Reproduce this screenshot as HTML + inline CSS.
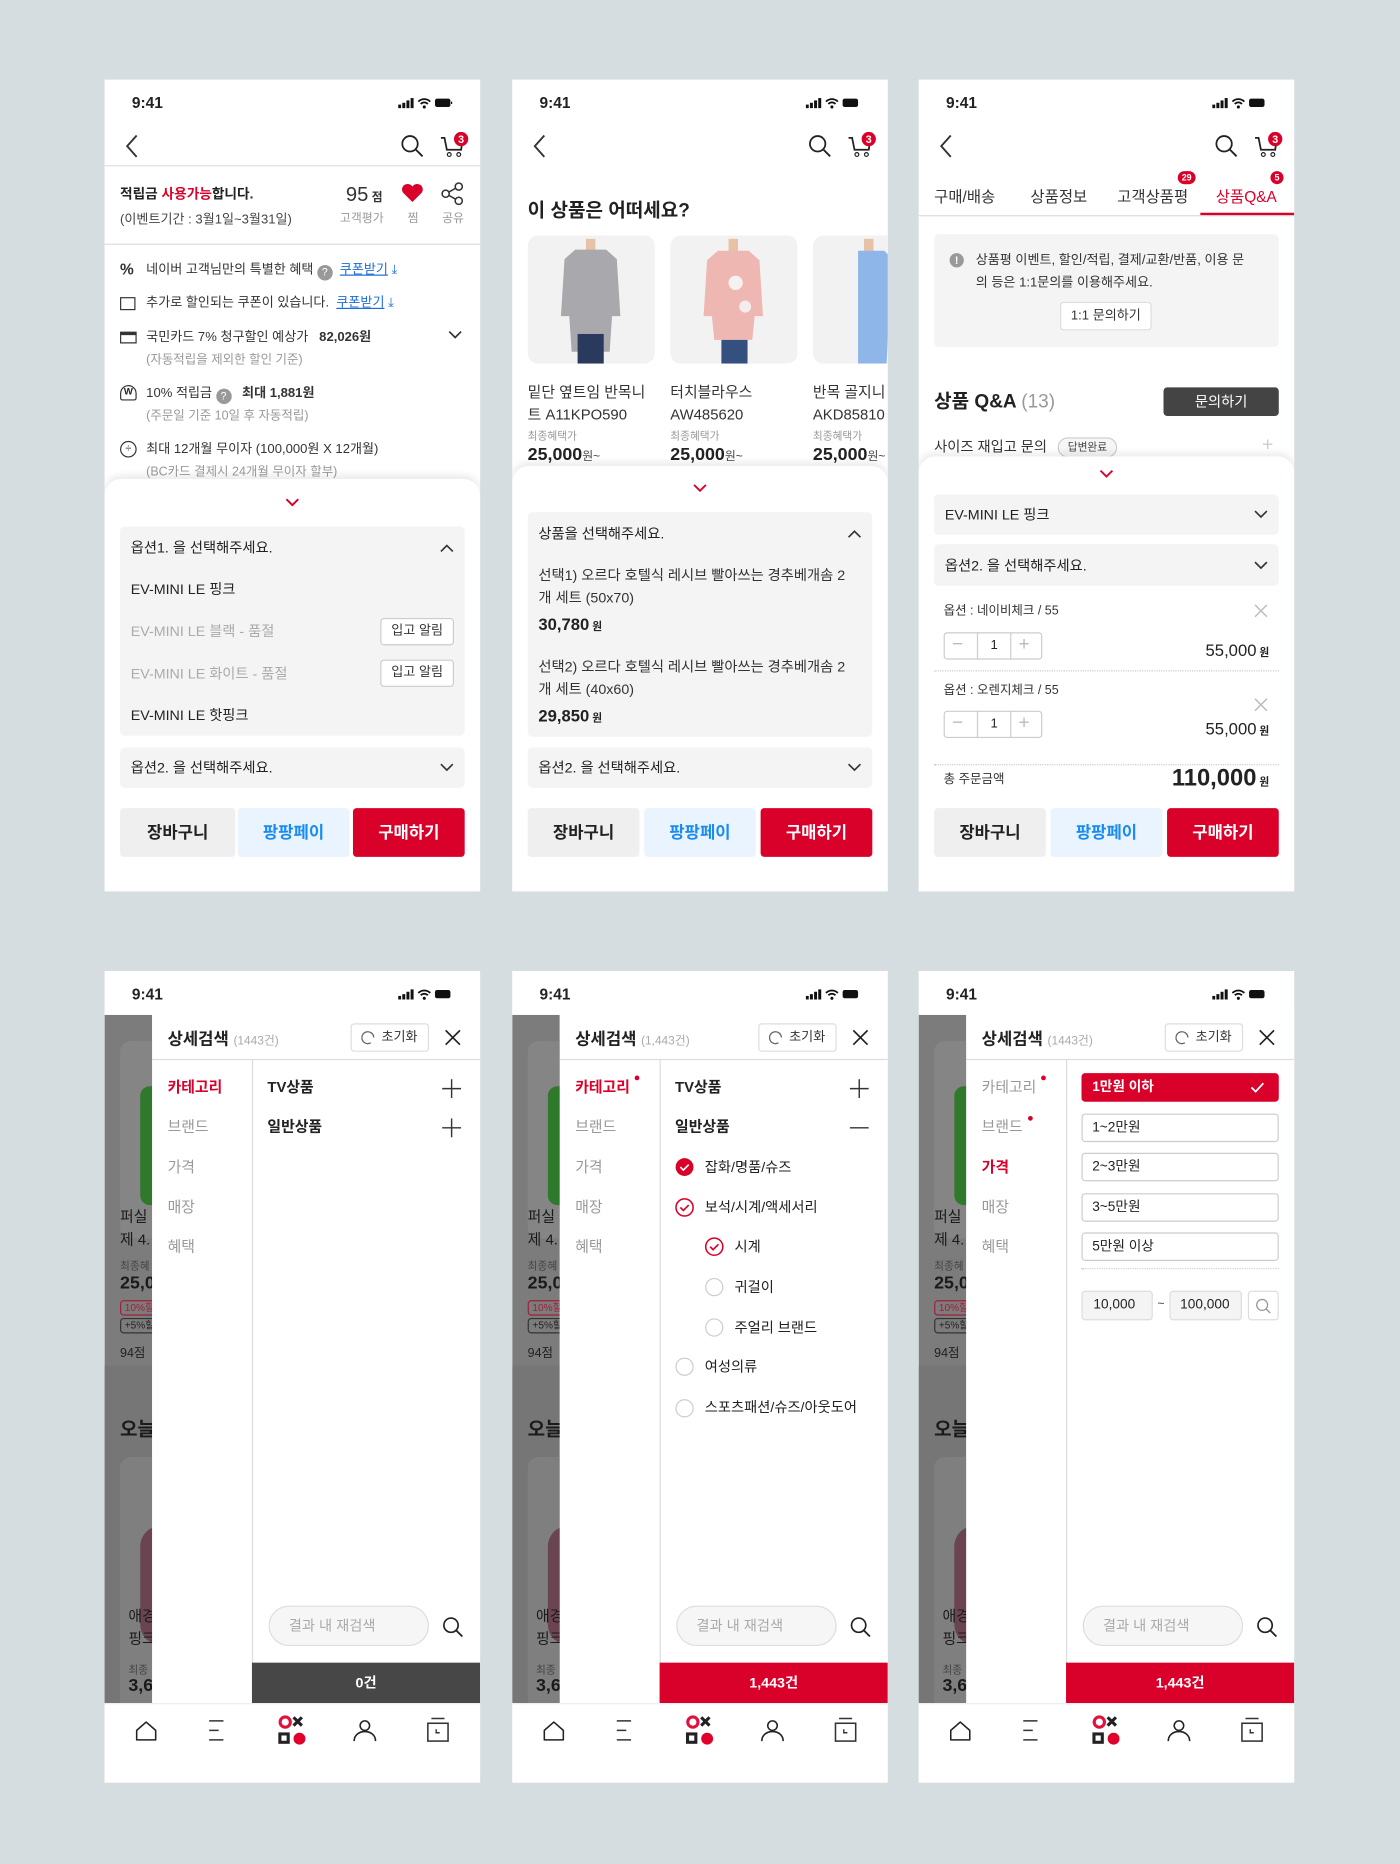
<!DOCTYPE html>
<html><head><meta charset="utf-8">
<style>
*{margin:0;padding:0;box-sizing:border-box}
html,body{width:1400px;height:1864px;overflow:hidden;background:#d6dde1}
body{font-family:"Liberation Sans","Noto Sans CJK KR",sans-serif;color:#222}
#w{position:absolute;left:0;top:0;width:1178px;height:1568px;transform:scale(1.188455);transform-origin:0 0;background:#d6dde1}
.ph{position:absolute;width:316px;height:683px;background:#fff;overflow:hidden}
.t{position:absolute;white-space:nowrap;line-height:16px;font-size:12px}
.a{position:absolute}
.g{color:#999}
.r{color:#d9002a}
.b{font-weight:bold}
.box{position:absolute;background:#f4f4f4;border-radius:4px}
.sheet{position:absolute;left:0;right:0;bottom:0;background:#fff;border-radius:14px 14px 0 0;box-shadow:0 -3px 6px rgba(0,0,0,.08)}
.btn{position:absolute;height:41px;top:613px;border-radius:3px;font-size:14px;font-weight:bold;text-align:center;line-height:41px}
.alarm{position:absolute;left:232px;width:62px;height:23px;border:1px solid #ccc;background:#fff;border-radius:3px;font-size:11px;text-align:center;line-height:21px;color:#333}
.opt{position:absolute;left:137px;width:166px;height:24px;border:1px solid #ccc;border-radius:3px;font-size:11.5px;line-height:22px;padding-left:8px;color:#222}
.strip{position:absolute;left:0;top:37px;width:40px;height:579px;background:#7c7c7c;overflow:hidden}
.panel{position:absolute;left:40px;top:37px;width:276px;height:579px;background:#fff}
.dot{position:absolute;width:4px;height:4px;border-radius:2px;background:#d9002a}
</style></head><body><div id="w">

<!-- PHONE 1 -->
<div class="ph" style="left:88px;top:67px">
 <div class="t b" style="left:23px;top:12px;font-size:13px">9:41</div>
 <svg class="a" style="left:247px;top:15px" width="46" height="10" viewBox="0 0 46 10"><rect x="0" y="6" width="2.5" height="3" fill="#111"/><rect x="3.5" y="4.5" width="2.5" height="4.5" fill="#111"/><rect x="7" y="2.5" width="2.5" height="6.5" fill="#111"/><rect x="10.5" y="0.5" width="2.5" height="8.5" fill="#111"/><path d="M17 3.5a7 7 0 0 1 10 0M19 5.5a4 4 0 0 1 6 0" stroke="#111" stroke-width="1.5" fill="none"/><circle cx="22" cy="8" r="1.3" fill="#111"/><rect x="31" y="1" width="13" height="7" rx="1.8" fill="#111"/><rect x="44.5" y="3.5" width="1" height="2" fill="#111"/></svg>
 <svg class="a" style="left:16px;top:46px" width="14" height="20"><path d="M11 1L3 10l8 9" stroke="#333" stroke-width="1.6" fill="none"/></svg>
 <svg class="a" style="left:249px;top:46px" width="20" height="20"><circle cx="8" cy="8" r="6.5" stroke="#222" stroke-width="1.5" fill="none"/><path d="M13 13l5.5 5.5" stroke="#222" stroke-width="1.6"/></svg>
 <svg class="a" style="left:282px;top:44px" width="26" height="24"><path d="M1 5h3l2 10h12l1-7" stroke="#222" stroke-width="1.5" fill="none"/><circle cx="8" cy="19" r="1.6" stroke="#222" fill="none"/><circle cx="16" cy="19" r="1.6" stroke="#222" fill="none"/><circle cx="18" cy="6" r="6" fill="#d9002a"/><text x="18" y="9.5" font-size="9" fill="#fff" text-anchor="middle" font-weight="bold" font-family="Liberation Sans">3</text></svg>
 <div class="a" style="left:0;right:0;top:72px;border-top:1px solid #ddd"></div>
 <div class="t b" style="left:13px;top:89px;font-size:11.5px">적립금 <span class="r">사용가능</span>합니다.</div>
 <div class="t" style="left:13px;top:110px;font-size:11px;color:#444">(이벤트기간 : 3월1일~3월31일)</div>
 <div class="t" style="left:203px;top:87px;font-size:17px;line-height:20px;color:#333">95<span class="b" style="font-size:10px"> 점</span></div>
 <div class="t g" style="left:198px;top:110px;font-size:10px">고객평가</div>
 <svg class="a" style="left:249px;top:86px" width="20" height="18"><path d="M10 17L2 9a4.5 4.5 0 0 1 8-5 4.5 4.5 0 0 1 8 5z" fill="#d9002a"/></svg>
 <div class="t g" style="left:255px;top:110px;font-size:10px">찜</div>
 <svg class="a" style="left:283px;top:86px" width="20" height="20"><circle cx="15" cy="4" r="3" stroke="#333" stroke-width="1.3" fill="none"/><circle cx="4" cy="10" r="3" stroke="#333" stroke-width="1.3" fill="none"/><circle cx="15" cy="16" r="3" stroke="#333" stroke-width="1.3" fill="none"/><path d="M6.7 8.6l5.6-3.2M6.7 11.4l5.6 3.2" stroke="#333" stroke-width="1.3"/></svg>
 <div class="t g" style="left:284px;top:110px;font-size:10px">공유</div>
 <div class="a" style="left:0;right:0;top:138px;border-top:1px solid #ddd"></div>
 <div class="t b" style="left:13px;top:152px;font-size:13px;color:#333">%</div>
 <div class="t" style="left:35px;top:152px;font-size:11px;color:#333">네이버 고객님만의 특별한 혜택 <span style="display:inline-block;width:13px;height:13px;border-radius:7px;background:#999;color:#fff;font-size:9px;text-align:center;line-height:13px;vertical-align:-2px">?</span> &nbsp;<span style="color:#1a6dd6;text-decoration:underline">쿠폰받기</span> <span style="color:#1a6dd6">⤓</span></div>
 <div class="a" style="left:13px;top:183px;width:13px;height:11px;border:1.3px solid #333"></div>
 <div class="t" style="left:35px;top:180px;font-size:11px;color:#333">추가로 할인되는 쿠폰이 있습니다. &nbsp;<span style="color:#1a6dd6;text-decoration:underline">쿠폰받기</span> <span style="color:#1a6dd6">⤓</span></div>
 <div class="a" style="left:13px;top:212px;width:14px;height:10px;border:1.3px solid #333;border-top-width:3px"></div>
 <div class="t" style="left:35px;top:209px;font-size:11px;color:#333">국민카드 7% 청구할인 예상가 &nbsp;&nbsp;<b>82,026원</b></div>
 <svg class="a" style="left:289px;top:211px" width="12" height="8"><path d="M1 1l5 5 5-5" stroke="#333" stroke-width="1.4" fill="none"/></svg>
 <div class="t g" style="left:35px;top:228px;font-size:10.5px">(자동적립을 제외한 할인 기준)</div>
 <div class="a" style="left:13px;top:257px;width:14px;height:13px;border:1.4px solid #333;border-radius:7px 7px 2px 2px;font-size:8px;text-align:center;line-height:10px;font-weight:bold">W</div>
 <div class="t" style="left:35px;top:256px;font-size:11px;color:#333">10% 적립금 <span style="display:inline-block;width:13px;height:13px;border-radius:7px;background:#999;color:#fff;font-size:9px;text-align:center;line-height:13px;vertical-align:-2px">?</span> &nbsp;&nbsp;<b>최대 1,881원</b></div>
 <div class="t g" style="left:35px;top:275px;font-size:10.5px">(주문일 기준 10일 후 자동적립)</div>
 <div class="a" style="left:13px;top:304px;width:14px;height:14px;border:1.3px solid #333;border-radius:7px;font-size:9px;text-align:center;line-height:11px">÷</div>
 <div class="t" style="left:35px;top:303px;font-size:11px;color:#333">최대 12개월 무이자 (100,000원 X 12개월)</div>
 <div class="t g" style="left:35px;top:322px;font-size:10.5px">(BC카드 결제시 24개월 무이자 할부)</div>
 <div class="sheet" style="top:336px">
  <svg class="a" style="left:152px;top:16px" width="12" height="8"><path d="M1 1l5 5 5-5" stroke="#d9002a" stroke-width="1.6" fill="none"/></svg>
  <div class="box" style="left:13px;top:40px;width:290px;height:176px"></div>
  <div class="t" style="left:22px;top:50px;font-size:12px">옵션1. 을 선택해주세요.</div>
  <svg class="a" style="left:282px;top:54px" width="12" height="8"><path d="M1 7l5-5 5 5" stroke="#333" stroke-width="1.4" fill="none"/></svg>
  <div class="t" style="left:22px;top:85px;font-size:12px">EV-MINI LE 핑크</div>
  <div class="t" style="left:22px;top:120px;font-size:12px;color:#aaa">EV-MINI LE 블랙 - 품절</div>
  <div class="alarm" style="top:117px">입고 알림</div>
  <div class="t" style="left:22px;top:156px;font-size:12px;color:#aaa">EV-MINI LE 화이트 - 품절</div>
  <div class="alarm" style="top:152px">입고 알림</div>
  <div class="t" style="left:22px;top:191px;font-size:12px">EV-MINI LE 핫핑크</div>
  <div class="box" style="left:13px;top:226px;width:290px;height:34px"></div>
  <div class="t" style="left:22px;top:235px;font-size:12px">옵션2. 을 선택해주세요.</div>
  <svg class="a" style="left:282px;top:239px" width="12" height="8"><path d="M1 1l5 5 5-5" stroke="#333" stroke-width="1.4" fill="none"/></svg>
 </div>
 <div class="btn" style="left:13px;width:97px;background:#efefef;color:#222">장바구니</div>
 <div class="btn" style="left:112px;width:94px;background:#eaf4ff;color:#1a8cf0">팡팡페이</div>
 <div class="btn" style="left:209px;width:94px;background:#d9002a;color:#fff">구매하기</div>
</div>

<!-- PHONE 2 -->
<div class="ph" style="left:431px;top:67px">
 <div class="t b" style="left:23px;top:12px;font-size:13px">9:41</div>
 <svg class="a" style="left:247px;top:15px" width="46" height="10" viewBox="0 0 46 10"><rect x="0" y="6" width="2.5" height="3" fill="#111"/><rect x="3.5" y="4.5" width="2.5" height="4.5" fill="#111"/><rect x="7" y="2.5" width="2.5" height="6.5" fill="#111"/><rect x="10.5" y="0.5" width="2.5" height="8.5" fill="#111"/><path d="M17 3.5a7 7 0 0 1 10 0M19 5.5a4 4 0 0 1 6 0" stroke="#111" stroke-width="1.5" fill="none"/><circle cx="22" cy="8" r="1.3" fill="#111"/><rect x="31" y="1" width="13" height="7" rx="1.8" fill="#111"/></svg>
 <svg class="a" style="left:16px;top:46px" width="14" height="20"><path d="M11 1L3 10l8 9" stroke="#333" stroke-width="1.6" fill="none"/></svg>
 <svg class="a" style="left:249px;top:46px" width="20" height="20"><circle cx="8" cy="8" r="6.5" stroke="#222" stroke-width="1.5" fill="none"/><path d="M13 13l5.5 5.5" stroke="#222" stroke-width="1.6"/></svg>
 <svg class="a" style="left:282px;top:44px" width="26" height="24"><path d="M1 5h3l2 10h12l1-7" stroke="#222" stroke-width="1.5" fill="none"/><circle cx="8" cy="19" r="1.6" stroke="#222" fill="none"/><circle cx="16" cy="19" r="1.6" stroke="#222" fill="none"/><circle cx="18" cy="6" r="6" fill="#d9002a"/><text x="18" y="9.5" font-size="9" fill="#fff" text-anchor="middle" font-weight="bold" font-family="Liberation Sans">3</text></svg>
 <div class="t b" style="left:13px;top:101px;font-size:16px;line-height:20px">이 상품은 어떠세요?</div>
 <svg class="a" style="left:13px;top:131px" width="320" height="108">
  <rect x="0" y="0" width="107" height="108" rx="9" fill="#f2f2f2"/>
  <rect x="120" y="0" width="107" height="108" rx="9" fill="#f2f2f2"/>
  <rect x="240" y="0" width="107" height="108" rx="9" fill="#f2f2f2"/>
  <rect x="49" y="3" width="8" height="12" fill="#e6c2a6"/>
  <path d="M40 12h26l9 8 3 48h-7l-2 30h-32l-2-30h-7l3-48z" fill="#a9a9ad"/>
  <rect x="42" y="83" width="22" height="25" fill="#2a3a5c"/>
  <rect x="169" y="3" width="8" height="12" fill="#e6c2a6"/>
  <path d="M160 13h26l9 8 3 47h-7l-2 20h-32l-2-20h-7l3-47z" fill="#efb7b2"/>
  <circle cx="175" cy="40" r="6" fill="#f7f2f2"/><circle cx="183" cy="60" r="5" fill="#f4eded"/>
  <rect x="163" y="88" width="22" height="20" fill="#33507e"/>
  <rect x="283" y="3" width="8" height="12" fill="#e6c2a6"/>
  <path d="M278 13h22l8 8 3 48h-7l-2 39h-24z" fill="#8fb6e8"/>
 </svg>
 <div class="t" style="left:13px;top:254px;font-size:12.5px;line-height:19px;color:#333">밑단 옆트임 반목니<br>트 A11KPO590</div>
 <div class="t" style="left:133px;top:254px;font-size:12.5px;line-height:19px;color:#333">터치블라우스<br>AW485620</div>
 <div class="t" style="left:253px;top:254px;font-size:12.5px;line-height:19px;color:#333">반목 골지니<br>AKD85810</div>
 <div class="t g" style="left:13px;top:294px;font-size:9px;line-height:12px">최종혜택가</div>
 <div class="t g" style="left:133px;top:294px;font-size:9px;line-height:12px">최종혜택가</div>
 <div class="t g" style="left:253px;top:294px;font-size:9px;line-height:12px">최종혜택가</div>
 <div class="t b" style="left:13px;top:307px;font-size:15px;line-height:18px">25,000<span style="font-size:10px;font-weight:normal;color:#444">원~</span></div>
 <div class="t b" style="left:133px;top:307px;font-size:15px;line-height:18px">25,000<span style="font-size:10px;font-weight:normal;color:#444">원~</span></div>
 <div class="t b" style="left:253px;top:307px;font-size:15px;line-height:18px">25,000<span style="font-size:10px;font-weight:normal;color:#444">원~</span></div>
 <div class="sheet" style="top:325px">
  <svg class="a" style="left:152px;top:15px" width="12" height="8"><path d="M1 1l5 5 5-5" stroke="#d9002a" stroke-width="1.6" fill="none"/></svg>
  <div class="box" style="left:13px;top:39px;width:290px;height:189px"></div>
  <div class="t" style="left:22px;top:49px;font-size:12px">상품을 선택해주세요.</div>
  <svg class="a" style="left:282px;top:53px" width="12" height="8"><path d="M1 7l5-5 5 5" stroke="#333" stroke-width="1.4" fill="none"/></svg>
  <div class="t" style="left:22px;top:83px;font-size:12px;line-height:19px;color:#333">선택1) 오르다 호텔식 레시브 빨아쓰는 경추베개솜 2<br>개 세트 (50x70)</div>
  <div class="t b" style="left:22px;top:124px;font-size:14px;line-height:18px">30,780<span style="font-size:9px"> 원</span></div>
  <div class="t" style="left:22px;top:160px;font-size:12px;line-height:19px;color:#333">선택2) 오르다 호텔식 레시브 빨아쓰는 경추베개솜 2<br>개 세트 (40x60)</div>
  <div class="t b" style="left:22px;top:201px;font-size:14px;line-height:18px">29,850<span style="font-size:9px"> 원</span></div>
  <div class="box" style="left:13px;top:237px;width:290px;height:34px"></div>
  <div class="t" style="left:22px;top:246px;font-size:12px">옵션2. 을 선택해주세요.</div>
  <svg class="a" style="left:282px;top:250px" width="12" height="8"><path d="M1 1l5 5 5-5" stroke="#333" stroke-width="1.4" fill="none"/></svg>
 </div>
 <div class="btn" style="left:13px;width:94px;background:#efefef;color:#222">장바구니</div>
 <div class="btn" style="left:111px;width:94px;background:#eaf4ff;color:#1a8cf0">팡팡페이</div>
 <div class="btn" style="left:209px;width:94px;background:#d9002a;color:#fff">구매하기</div>
</div>

<!-- PHONE 3 -->
<div class="ph" style="left:773px;top:67px">
 <div class="t b" style="left:23px;top:12px;font-size:13px">9:41</div>
 <svg class="a" style="left:247px;top:15px" width="46" height="10" viewBox="0 0 46 10"><rect x="0" y="6" width="2.5" height="3" fill="#111"/><rect x="3.5" y="4.5" width="2.5" height="4.5" fill="#111"/><rect x="7" y="2.5" width="2.5" height="6.5" fill="#111"/><rect x="10.5" y="0.5" width="2.5" height="8.5" fill="#111"/><path d="M17 3.5a7 7 0 0 1 10 0M19 5.5a4 4 0 0 1 6 0" stroke="#111" stroke-width="1.5" fill="none"/><circle cx="22" cy="8" r="1.3" fill="#111"/><rect x="31" y="1" width="13" height="7" rx="1.8" fill="#111"/></svg>
 <svg class="a" style="left:16px;top:46px" width="14" height="20"><path d="M11 1L3 10l8 9" stroke="#333" stroke-width="1.6" fill="none"/></svg>
 <svg class="a" style="left:249px;top:46px" width="20" height="20"><circle cx="8" cy="8" r="6.5" stroke="#222" stroke-width="1.5" fill="none"/><path d="M13 13l5.5 5.5" stroke="#222" stroke-width="1.6"/></svg>
 <svg class="a" style="left:282px;top:44px" width="26" height="24"><path d="M1 5h3l2 10h12l1-7" stroke="#222" stroke-width="1.5" fill="none"/><circle cx="8" cy="19" r="1.6" stroke="#222" fill="none"/><circle cx="16" cy="19" r="1.6" stroke="#222" fill="none"/><circle cx="18" cy="6" r="6" fill="#d9002a"/><text x="18" y="9.5" font-size="9" fill="#fff" text-anchor="middle" font-weight="bold" font-family="Liberation Sans">3</text></svg>
 <div class="t" style="left:13px;top:91px;font-size:13px;color:#333">구매/배송</div>
 <div class="t" style="left:94px;top:91px;font-size:13px;color:#333">상품정보</div>
 <div class="t" style="left:167px;top:91px;font-size:13px;color:#333">고객상품평</div>
 <div class="t r" style="left:250px;top:91px;font-size:13px">상품Q&amp;A</div>
 <div class="a" style="left:218px;top:77px;width:15px;height:11px;border-radius:6px;background:#d9002a;color:#fff;font-size:7.5px;font-weight:bold;text-align:center;line-height:11px">29</div>
 <div class="a" style="left:296px;top:77px;width:11px;height:11px;border-radius:6px;background:#d9002a;color:#fff;font-size:7.5px;font-weight:bold;text-align:center;line-height:11px">5</div>
 <div class="a" style="left:0;right:0;top:114px;border-top:1px solid #ddd"></div>
 <div class="a" style="left:237px;right:0;top:112px;height:2px;background:#d9002a"></div>
 <div class="box" style="left:13px;top:130px;width:290px;height:95px"></div>
 <div class="a" style="left:26px;top:146px;width:12px;height:12px;border-radius:6px;background:#999;color:#fff;font-size:9px;font-weight:bold;text-align:center;line-height:12px">!</div>
 <div class="t" style="left:48px;top:143px;font-size:11px;line-height:19px;color:#333">상품평 이벤트, 할인/적립, 결제/교환/반품, 이용 문<br>의 등은 1:1문의를 이용해주세요.</div>
 <div class="a" style="left:119px;top:187px;width:77px;height:24px;background:#fff;border:1px solid #ddd;border-radius:3px;font-size:11px;text-align:center;line-height:22px;color:#333">1:1 문의하기</div>
 <div class="t b" style="left:13px;top:262px;font-size:16px;line-height:20px">상품 Q&amp;A <span style="font-weight:normal;color:#999">(13)</span></div>
 <div class="a" style="left:206px;top:259px;width:97px;height:24px;background:#444;border-radius:3px;color:#fff;font-size:12px;text-align:center;line-height:24px">문의하기</div>
 <div class="t" style="left:13px;top:301px;font-size:12px;color:#333">사이즈 재입고 문의</div>
 <div class="a" style="left:117px;top:301px;width:50px;height:17px;border:1px solid #ccc;border-radius:9px;background:#f6f6f6;font-size:9px;text-align:center;line-height:15px;color:#444">답변완료</div>
 <div class="t" style="left:289px;top:300px;font-size:16px;color:#ccc">+</div>
 <div class="sheet" style="top:317px">
  <svg class="a" style="left:152px;top:11px" width="12" height="8"><path d="M1 1l5 5 5-5" stroke="#d9002a" stroke-width="1.6" fill="none"/></svg>
  <div class="box" style="left:13px;top:32px;width:290px;height:34px"></div>
  <div class="t" style="left:22px;top:41px;font-size:12px">EV-MINI LE 핑크</div>
  <svg class="a" style="left:282px;top:45px" width="12" height="8"><path d="M1 1l5 5 5-5" stroke="#333" stroke-width="1.4" fill="none"/></svg>
  <div class="box" style="left:13px;top:74px;width:290px;height:35px"></div>
  <div class="t" style="left:22px;top:84px;font-size:12px">옵션2. 을 선택해주세요.</div>
  <svg class="a" style="left:282px;top:88px" width="12" height="8"><path d="M1 1l5 5 5-5" stroke="#333" stroke-width="1.4" fill="none"/></svg>
  <div class="t" style="left:21px;top:122px;font-size:10.5px;color:#333">옵션 : 네이비체크 / 55</div>
  <svg class="a" style="left:282px;top:124px" width="12" height="12"><path d="M1 1l10 10M11 1L1 11" stroke="#bbb" stroke-width="1.2"/></svg>
  <div class="a" style="left:21px;top:148px;width:83px;height:23px;border:1px solid #ccc;border-radius:3px;background:#fff"></div>
  <div class="a" style="left:49px;top:148px;width:29px;height:23px;border-left:1px solid #ccc;border-right:1px solid #ccc;font-size:11px;text-align:center;line-height:23px">1</div>
  <div class="t" style="left:28px;top:151px;color:#bbb;font-size:16px">−</div>
  <div class="t" style="left:84px;top:151px;color:#bbb;font-size:16px">+</div>
  <div class="t" style="right:21px;top:155px;font-size:14px;line-height:16px;color:#222">55,000<span class="b" style="font-size:9px"> 원</span></div>
  <div class="a" style="left:13px;right:13px;top:180px;border-top:1px dotted #ccc"></div>
  <div class="t" style="left:21px;top:189px;font-size:10.5px;color:#333">옵션 : 오렌지체크 / 55</div>
  <svg class="a" style="left:282px;top:203px" width="12" height="12"><path d="M1 1l10 10M11 1L1 11" stroke="#bbb" stroke-width="1.2"/></svg>
  <div class="a" style="left:21px;top:214px;width:83px;height:23px;border:1px solid #ccc;border-radius:3px;background:#fff"></div>
  <div class="a" style="left:49px;top:214px;width:29px;height:23px;border-left:1px solid #ccc;border-right:1px solid #ccc;font-size:11px;text-align:center;line-height:23px">1</div>
  <div class="t" style="left:28px;top:217px;color:#bbb;font-size:16px">−</div>
  <div class="t" style="left:84px;top:217px;color:#bbb;font-size:16px">+</div>
  <div class="t" style="right:21px;top:221px;font-size:14px;line-height:16px;color:#222">55,000<span class="b" style="font-size:9px"> 원</span></div>
  <div class="a" style="left:13px;right:13px;top:259px;border-top:1px dotted #ccc"></div>
  <div class="t" style="left:21px;top:264px;font-size:10.5px;color:#333">총 주문금액</div>
  <div class="t b" style="right:21px;top:259px;font-size:20px;line-height:24px">110,000<span style="font-size:9px"> 원</span></div>
 </div>
 <div class="btn" style="left:13px;width:94px;background:#efefef;color:#222">장바구니</div>
 <div class="btn" style="left:111px;width:94px;background:#eaf4ff;color:#1a8cf0">팡팡페이</div>
 <div class="btn" style="left:209px;width:94px;background:#d9002a;color:#fff">구매하기</div>
</div>

<!-- PHONE 4 -->
<div class="ph" style="left:88px;top:817px">
 <div class="t b" style="left:23px;top:12px;font-size:13px">9:41</div>
 <svg class="a" style="left:247px;top:15px" width="46" height="10" viewBox="0 0 46 10"><rect x="0" y="6" width="2.5" height="3" fill="#111"/><rect x="3.5" y="4.5" width="2.5" height="4.5" fill="#111"/><rect x="7" y="2.5" width="2.5" height="6.5" fill="#111"/><rect x="10.5" y="0.5" width="2.5" height="8.5" fill="#111"/><path d="M17 3.5a7 7 0 0 1 10 0M19 5.5a4 4 0 0 1 6 0" stroke="#111" stroke-width="1.5" fill="none"/><circle cx="22" cy="8" r="1.3" fill="#111"/><rect x="31" y="1" width="13" height="7" rx="1.8" fill="#111"/></svg>
 <div class="strip">
  <div class="a" style="left:13px;top:22px;width:60px;height:166px;border-radius:9px;background:#858585"></div>
  <div class="a" style="left:30px;top:60px;width:20px;height:100px;border-radius:8px;background:#2f7a2a"></div>
  <div class="t" style="left:13px;top:161px;font-size:12.5px;line-height:19px;color:#1a1a1a">퍼실<br>제 4.</div>
  <div class="t" style="left:13px;top:203px;font-size:9px;color:#444">최종혜</div>
  <div class="t b" style="left:13px;top:218px;font-size:15px;color:#1a1a1a">25,0</div>
  <div class="a" style="left:13px;top:240px;width:40px;height:13px;border:1px solid #a0203a;border-radius:3px;font-size:8.5px;color:#a0203a;padding-left:3px;line-height:11px">10%할</div>
  <div class="a" style="left:13px;top:255px;width:40px;height:13px;border:1px solid #333;border-radius:3px;font-size:8.5px;color:#222;padding-left:3px;line-height:11px">+5%할</div>
  <div class="t" style="left:13px;top:277px;font-size:10.5px;color:#222">94점</div>
  <div class="a" style="left:0;top:295px;width:40px;height:290px;background:#767676"></div>
  <div class="t b" style="left:13px;top:340px;font-size:16px;line-height:20px;color:#1a1a1a">오늘</div>
  <div class="a" style="left:13px;top:372px;width:60px;height:240px;border-radius:9px;background:#7f7f7f"></div>
  <div class="a" style="left:30px;top:430px;width:34px;height:100px;border-radius:17px;background:#6a4450"></div>
  <div class="t" style="left:20px;top:497px;font-size:12.5px;line-height:19px;color:#1a1a1a">애경<br>핑크</div>
  <div class="t" style="left:20px;top:543px;font-size:9px;color:#444">최종</div>
  <div class="t b" style="left:20px;top:557px;font-size:15px;color:#1a1a1a">3,6</div>
 </div>
 <div class="panel">
  <div class="t b" style="left:13px;top:11px;font-size:14px;line-height:18px">상세검색 <span style="font-size:10px;font-weight:normal;color:#aaa">(1443건)</span></div>
  <div class="a" style="left:167px;top:7px;width:66px;height:24px;border:1px solid #ddd;border-radius:3px;font-size:11px;line-height:22px;padding-left:25px;color:#333">초기화</div>
  <svg class="a" style="left:176px;top:13px" width="12" height="12"><path d="M8 10.5A5 5 0 1 1 10.5 6" stroke="#666" stroke-width="1.1" fill="none"/></svg>
  <svg class="a" style="left:246px;top:12px" width="14" height="14"><path d="M1 1l12 12M13 1L1 13" stroke="#222" stroke-width="1.4"/></svg>
  <div class="a" style="left:0;right:0;top:37px;border-top:1px solid #ddd"></div>
  <div class="a" style="left:84px;top:37px;bottom:0;border-left:1px solid #ddd"></div>
  <div class="t b r" style="left:13px;top:53px;font-size:12.5px">카테고리</div>
  <div class="t g" style="left:13px;top:86px;font-size:12.5px">브랜드</div>
  <div class="t g" style="left:13px;top:120px;font-size:12.5px">가격</div>
  <div class="t g" style="left:13px;top:154px;font-size:12.5px">매장</div>
  <div class="t g" style="left:13px;top:187px;font-size:12.5px">혜택</div>
  <div class="t b" style="left:97px;top:53px;font-size:12.5px">TV상품</div>
  <div class="t b" style="left:97px;top:86px;font-size:12.5px">일반상품</div>
  <svg class="a" style="left:244px;top:54px" width="16" height="16"><path d="M8 0v16M0 8h16" stroke="#333" stroke-width="1.2"/></svg>
  <svg class="a" style="left:244px;top:87px" width="16" height="16"><path d="M8 0v16M0 8h16" stroke="#333" stroke-width="1.2"/></svg>
  <div class="a" style="left:98px;top:497px;width:135px;height:34px;border:1px solid #ddd;border-radius:17px;background:#f6f6f6;font-size:12px;line-height:32px;padding-left:16px;color:#aaa">결과 내 재검색</div>
  <svg class="a" style="left:244px;top:506px" width="18" height="18"><circle cx="7.5" cy="7.5" r="6" stroke="#222" stroke-width="1.4" fill="none"/><path d="M12 12l5 5" stroke="#222" stroke-width="1.5"/></svg>
  <div class="a" style="left:84px;right:0;top:545px;height:34px;background:#474747;color:#fff;font-size:12px;font-weight:bold;text-align:center;line-height:34px">0건</div>
 </div>
 <svg class="a" style="left:0;top:616px" width="316" height="67"><rect width="316" height="67" fill="#fff"/><line x1="0" y1="0.5" x2="316" y2="0.5" stroke="#eee"/>
  <path d="M27 31v-8l8-7 8 7v8z" stroke="#222" stroke-width="1.3" fill="none" stroke-linejoin="round"/>
  <path d="M88 15h12M88 23h8M88 31h12" stroke="#333" stroke-width="1.3"/>
  <circle cx="152" cy="16" r="4.3" stroke="#e0123a" stroke-width="2.6" fill="none"/><path d="M159 12l7 7M166 12l-7 7" stroke="#222" stroke-width="2.6"/><rect x="147.5" y="26" width="7" height="7" stroke="#222" stroke-width="2.6" fill="none"/><circle cx="164" cy="30" r="5" fill="#e0002a"/>
  <circle cx="219" cy="19" r="4" stroke="#222" stroke-width="1.3" fill="none"/><path d="M210 32c0-5 4-8 9-8s9 3 9 8" stroke="#222" stroke-width="1.3" fill="none"/>
  <rect x="272" y="17" width="17" height="15" stroke="#333" stroke-width="1.3" fill="none"/><path d="M275 13h11M279 22v3h3" stroke="#333" stroke-width="1.2" fill="none"/>
 </svg>
</div>

<!-- PHONE 5 -->
<div class="ph" style="left:431px;top:817px">
 <div class="t b" style="left:23px;top:12px;font-size:13px">9:41</div>
 <svg class="a" style="left:247px;top:15px" width="46" height="10" viewBox="0 0 46 10"><rect x="0" y="6" width="2.5" height="3" fill="#111"/><rect x="3.5" y="4.5" width="2.5" height="4.5" fill="#111"/><rect x="7" y="2.5" width="2.5" height="6.5" fill="#111"/><rect x="10.5" y="0.5" width="2.5" height="8.5" fill="#111"/><path d="M17 3.5a7 7 0 0 1 10 0M19 5.5a4 4 0 0 1 6 0" stroke="#111" stroke-width="1.5" fill="none"/><circle cx="22" cy="8" r="1.3" fill="#111"/><rect x="31" y="1" width="13" height="7" rx="1.8" fill="#111"/></svg>
 <div class="strip">
  <div class="a" style="left:13px;top:22px;width:60px;height:166px;border-radius:9px;background:#858585"></div>
  <div class="a" style="left:30px;top:60px;width:20px;height:100px;border-radius:8px;background:#2f7a2a"></div>
  <div class="t" style="left:13px;top:161px;font-size:12.5px;line-height:19px;color:#1a1a1a">퍼실<br>제 4.</div>
  <div class="t" style="left:13px;top:203px;font-size:9px;color:#444">최종혜</div>
  <div class="t b" style="left:13px;top:218px;font-size:15px;color:#1a1a1a">25,0</div>
  <div class="a" style="left:13px;top:240px;width:40px;height:13px;border:1px solid #a0203a;border-radius:3px;font-size:8.5px;color:#a0203a;padding-left:3px;line-height:11px">10%할</div>
  <div class="a" style="left:13px;top:255px;width:40px;height:13px;border:1px solid #333;border-radius:3px;font-size:8.5px;color:#222;padding-left:3px;line-height:11px">+5%할</div>
  <div class="t" style="left:13px;top:277px;font-size:10.5px;color:#222">94점</div>
  <div class="a" style="left:0;top:295px;width:40px;height:290px;background:#767676"></div>
  <div class="t b" style="left:13px;top:340px;font-size:16px;line-height:20px;color:#1a1a1a">오늘</div>
  <div class="a" style="left:13px;top:372px;width:60px;height:240px;border-radius:9px;background:#7f7f7f"></div>
  <div class="a" style="left:30px;top:430px;width:34px;height:100px;border-radius:17px;background:#6a4450"></div>
  <div class="t" style="left:20px;top:497px;font-size:12.5px;line-height:19px;color:#1a1a1a">애경<br>핑크</div>
  <div class="t" style="left:20px;top:543px;font-size:9px;color:#444">최종</div>
  <div class="t b" style="left:20px;top:557px;font-size:15px;color:#1a1a1a">3,6</div>
 </div>
 <div class="panel">
  <div class="t b" style="left:13px;top:11px;font-size:14px;line-height:18px">상세검색 <span style="font-size:10px;font-weight:normal;color:#aaa">(1,443건)</span></div>
  <div class="a" style="left:167px;top:7px;width:66px;height:24px;border:1px solid #ddd;border-radius:3px;font-size:11px;line-height:22px;padding-left:25px;color:#333">초기화</div>
  <svg class="a" style="left:176px;top:13px" width="12" height="12"><path d="M8 10.5A5 5 0 1 1 10.5 6" stroke="#666" stroke-width="1.1" fill="none"/></svg>
  <svg class="a" style="left:246px;top:12px" width="14" height="14"><path d="M1 1l12 12M13 1L1 13" stroke="#222" stroke-width="1.4"/></svg>
  <div class="a" style="left:0;right:0;top:37px;border-top:1px solid #ddd"></div>
  <div class="a" style="left:84px;top:37px;bottom:0;border-left:1px solid #ddd"></div>
  <div class="t b r" style="left:13px;top:53px;font-size:12.5px">카테고리</div>
  <div class="dot" style="left:63px;top:51px"></div>
  <div class="t g" style="left:13px;top:86px;font-size:12.5px">브랜드</div>
  <div class="t g" style="left:13px;top:120px;font-size:12.5px">가격</div>
  <div class="t g" style="left:13px;top:154px;font-size:12.5px">매장</div>
  <div class="t g" style="left:13px;top:187px;font-size:12.5px">혜택</div>
  <div class="t b" style="left:97px;top:53px;font-size:12.5px">TV상품</div>
  <div class="t b" style="left:97px;top:86px;font-size:12.5px">일반상품</div>
  <svg class="a" style="left:244px;top:54px" width="16" height="16"><path d="M8 0v16M0 8h16" stroke="#333" stroke-width="1.2"/></svg>
  <svg class="a" style="left:244px;top:87px" width="16" height="16"><path d="M0 8h16" stroke="#333" stroke-width="1.2"/></svg>
  <svg class="a" style="left:97px;top:120px" width="120" height="200">
   <circle cx="8" cy="8" r="7.5" fill="#d9002a"/><path d="M4.5 8l2.5 2.5 4.5-4.5" stroke="#fff" stroke-width="1.4" fill="none"/>
   <circle cx="8" cy="42" r="7.2" stroke="#d9002a" stroke-width="1.3" fill="#fff"/><path d="M4.5 42l2.5 2.5 4.5-4.5" stroke="#d9002a" stroke-width="1.4" fill="none"/>
   <circle cx="33" cy="75" r="7.2" stroke="#d9002a" stroke-width="1.3" fill="#fff"/><path d="M29.5 75l2.5 2.5 4.5-4.5" stroke="#d9002a" stroke-width="1.4" fill="none"/>
   <circle cx="33" cy="109" r="7.2" stroke="#ccc" stroke-width="1" fill="#fff"/>
   <circle cx="33" cy="143" r="7.2" stroke="#ccc" stroke-width="1" fill="#fff"/>
   <circle cx="8" cy="176" r="7.2" stroke="#ccc" stroke-width="1" fill="#fff"/>
  </svg>
  <svg class="a" style="left:97px;top:323px" width="16" height="16"><circle cx="8" cy="8" r="7.2" stroke="#ccc" stroke-width="1" fill="#fff"/></svg>
  <div class="t" style="left:122px;top:120px;font-size:12px">잡화/명품/슈즈</div>
  <div class="t" style="left:122px;top:154px;font-size:12px">보석/시계/액세서리</div>
  <div class="t" style="left:147px;top:187px;font-size:12px">시계</div>
  <div class="t" style="left:147px;top:221px;font-size:12px">귀걸이</div>
  <div class="t" style="left:147px;top:255px;font-size:12px">주얼리 브랜드</div>
  <div class="t" style="left:122px;top:288px;font-size:12px">여성의류</div>
  <div class="t" style="left:122px;top:322px;font-size:12px">스포츠패션/슈즈/아웃도어</div>
  <div class="a" style="left:98px;top:497px;width:135px;height:34px;border:1px solid #ddd;border-radius:17px;background:#f6f6f6;font-size:12px;line-height:32px;padding-left:16px;color:#aaa">결과 내 재검색</div>
  <svg class="a" style="left:244px;top:506px" width="18" height="18"><circle cx="7.5" cy="7.5" r="6" stroke="#222" stroke-width="1.4" fill="none"/><path d="M12 12l5 5" stroke="#222" stroke-width="1.5"/></svg>
  <div class="a" style="left:84px;right:0;top:545px;height:34px;background:#d9002a;color:#fff;font-size:12px;font-weight:bold;text-align:center;line-height:34px">1,443건</div>
 </div>
 <svg class="a" style="left:0;top:616px" width="316" height="67"><rect width="316" height="67" fill="#fff"/><line x1="0" y1="0.5" x2="316" y2="0.5" stroke="#eee"/>
  <path d="M27 31v-8l8-7 8 7v8z" stroke="#222" stroke-width="1.3" fill="none" stroke-linejoin="round"/>
  <path d="M88 15h12M88 23h8M88 31h12" stroke="#333" stroke-width="1.3"/>
  <circle cx="152" cy="16" r="4.3" stroke="#e0123a" stroke-width="2.6" fill="none"/><path d="M159 12l7 7M166 12l-7 7" stroke="#222" stroke-width="2.6"/><rect x="147.5" y="26" width="7" height="7" stroke="#222" stroke-width="2.6" fill="none"/><circle cx="164" cy="30" r="5" fill="#e0002a"/>
  <circle cx="219" cy="19" r="4" stroke="#222" stroke-width="1.3" fill="none"/><path d="M210 32c0-5 4-8 9-8s9 3 9 8" stroke="#222" stroke-width="1.3" fill="none"/>
  <rect x="272" y="17" width="17" height="15" stroke="#333" stroke-width="1.3" fill="none"/><path d="M275 13h11M279 22v3h3" stroke="#333" stroke-width="1.2" fill="none"/>
 </svg>
</div>

<!-- PHONE 6 -->
<div class="ph" style="left:773px;top:817px">
 <div class="t b" style="left:23px;top:12px;font-size:13px">9:41</div>
 <svg class="a" style="left:247px;top:15px" width="46" height="10" viewBox="0 0 46 10"><rect x="0" y="6" width="2.5" height="3" fill="#111"/><rect x="3.5" y="4.5" width="2.5" height="4.5" fill="#111"/><rect x="7" y="2.5" width="2.5" height="6.5" fill="#111"/><rect x="10.5" y="0.5" width="2.5" height="8.5" fill="#111"/><path d="M17 3.5a7 7 0 0 1 10 0M19 5.5a4 4 0 0 1 6 0" stroke="#111" stroke-width="1.5" fill="none"/><circle cx="22" cy="8" r="1.3" fill="#111"/><rect x="31" y="1" width="13" height="7" rx="1.8" fill="#111"/></svg>
 <div class="strip">
  <div class="a" style="left:13px;top:22px;width:60px;height:166px;border-radius:9px;background:#858585"></div>
  <div class="a" style="left:30px;top:60px;width:20px;height:100px;border-radius:8px;background:#2f7a2a"></div>
  <div class="t" style="left:13px;top:161px;font-size:12.5px;line-height:19px;color:#1a1a1a">퍼실<br>제 4.</div>
  <div class="t" style="left:13px;top:203px;font-size:9px;color:#444">최종혜</div>
  <div class="t b" style="left:13px;top:218px;font-size:15px;color:#1a1a1a">25,0</div>
  <div class="a" style="left:13px;top:240px;width:40px;height:13px;border:1px solid #a0203a;border-radius:3px;font-size:8.5px;color:#a0203a;padding-left:3px;line-height:11px">10%할</div>
  <div class="a" style="left:13px;top:255px;width:40px;height:13px;border:1px solid #333;border-radius:3px;font-size:8.5px;color:#222;padding-left:3px;line-height:11px">+5%할</div>
  <div class="t" style="left:13px;top:277px;font-size:10.5px;color:#222">94점</div>
  <div class="a" style="left:0;top:295px;width:40px;height:290px;background:#767676"></div>
  <div class="t b" style="left:13px;top:340px;font-size:16px;line-height:20px;color:#1a1a1a">오늘</div>
  <div class="a" style="left:13px;top:372px;width:60px;height:240px;border-radius:9px;background:#7f7f7f"></div>
  <div class="a" style="left:30px;top:430px;width:34px;height:100px;border-radius:17px;background:#6a4450"></div>
  <div class="t" style="left:20px;top:497px;font-size:12.5px;line-height:19px;color:#1a1a1a">애경<br>핑크</div>
  <div class="t" style="left:20px;top:543px;font-size:9px;color:#444">최종</div>
  <div class="t b" style="left:20px;top:557px;font-size:15px;color:#1a1a1a">3,6</div>
 </div>
 <div class="panel">
  <div class="t b" style="left:13px;top:11px;font-size:14px;line-height:18px">상세검색 <span style="font-size:10px;font-weight:normal;color:#aaa">(1443건)</span></div>
  <div class="a" style="left:167px;top:7px;width:66px;height:24px;border:1px solid #ddd;border-radius:3px;font-size:11px;line-height:22px;padding-left:25px;color:#333">초기화</div>
  <svg class="a" style="left:176px;top:13px" width="12" height="12"><path d="M8 10.5A5 5 0 1 1 10.5 6" stroke="#666" stroke-width="1.1" fill="none"/></svg>
  <svg class="a" style="left:246px;top:12px" width="14" height="14"><path d="M1 1l12 12M13 1L1 13" stroke="#222" stroke-width="1.4"/></svg>
  <div class="a" style="left:0;right:0;top:37px;border-top:1px solid #ddd"></div>
  <div class="a" style="left:84px;top:37px;bottom:0;border-left:1px solid #ddd"></div>
  <div class="t g" style="left:13px;top:53px;font-size:12.5px">카테고리</div>
  <div class="dot" style="left:63px;top:51px"></div>
  <div class="t g" style="left:13px;top:86px;font-size:12.5px">브랜드</div>
  <div class="dot" style="left:52px;top:85px"></div>
  <div class="t b r" style="left:13px;top:120px;font-size:12.5px">가격</div>
  <div class="t g" style="left:13px;top:154px;font-size:12.5px">매장</div>
  <div class="t g" style="left:13px;top:187px;font-size:12.5px">혜택</div>
 </div>
 <div class="opt b" style="top:86px;background:#d9002a;border-color:#d9002a;color:#fff">1만원 이하</div>
 <svg class="a" style="left:279px;top:93px" width="12" height="10"><path d="M1 5l3.5 3.5L11 1.5" stroke="#fff" stroke-width="1.5" fill="none"/></svg>
 <div class="opt" style="top:120px">1~2만원</div>
 <div class="opt" style="top:153px">2~3만원</div>
 <div class="opt" style="top:187px">3~5만원</div>
 <div class="opt" style="top:220px">5만원 이상</div>
 <div class="a" style="left:137px;width:166px;top:250px;border-top:1px dotted #ccc"></div>
 <div class="a" style="left:137px;top:269px;width:60px;height:25px;border:1px solid #ddd;border-radius:3px;background:#f4f4f4;font-size:11.5px;line-height:23px;padding-left:9px">10,000</div>
 <div class="t" style="left:201px;top:273px;font-size:10px;color:#444">~</div>
 <div class="a" style="left:211px;top:269px;width:61px;height:25px;border:1px solid #ddd;border-radius:3px;background:#f4f4f4;font-size:11.5px;line-height:23px;padding-left:8px">100,000</div>
 <div class="a" style="left:277px;top:269px;width:26px;height:25px;border:1px solid #ddd;border-radius:3px;background:#fff"></div>
 <svg class="a" style="left:283px;top:275px" width="14" height="14"><circle cx="6" cy="6" r="4.6" stroke="#999" stroke-width="1.1" fill="none"/><path d="M9.3 9.3l3.5 3.5" stroke="#999" stroke-width="1.2"/></svg>
 <div class="a" style="left:138px;top:534px;width:135px;height:34px;border:1px solid #ddd;border-radius:17px;background:#f6f6f6;font-size:12px;line-height:32px;padding-left:16px;color:#aaa">결과 내 재검색</div>
 <svg class="a" style="left:284px;top:543px" width="18" height="18"><circle cx="7.5" cy="7.5" r="6" stroke="#222" stroke-width="1.4" fill="none"/><path d="M12 12l5 5" stroke="#222" stroke-width="1.5"/></svg>
 <div class="a" style="left:124px;right:0;top:582px;height:34px;background:#d9002a;color:#fff;font-size:12px;font-weight:bold;text-align:center;line-height:34px">1,443건</div>
 <svg class="a" style="left:0;top:616px" width="316" height="67"><rect width="316" height="67" fill="#fff"/><line x1="0" y1="0.5" x2="316" y2="0.5" stroke="#eee"/>
  <path d="M27 31v-8l8-7 8 7v8z" stroke="#222" stroke-width="1.3" fill="none" stroke-linejoin="round"/>
  <path d="M88 15h12M88 23h8M88 31h12" stroke="#333" stroke-width="1.3"/>
  <circle cx="152" cy="16" r="4.3" stroke="#e0123a" stroke-width="2.6" fill="none"/><path d="M159 12l7 7M166 12l-7 7" stroke="#222" stroke-width="2.6"/><rect x="147.5" y="26" width="7" height="7" stroke="#222" stroke-width="2.6" fill="none"/><circle cx="164" cy="30" r="5" fill="#e0002a"/>
  <circle cx="219" cy="19" r="4" stroke="#222" stroke-width="1.3" fill="none"/><path d="M210 32c0-5 4-8 9-8s9 3 9 8" stroke="#222" stroke-width="1.3" fill="none"/>
  <rect x="272" y="17" width="17" height="15" stroke="#333" stroke-width="1.3" fill="none"/><path d="M275 13h11M279 22v3h3" stroke="#333" stroke-width="1.2" fill="none"/>
 </svg>
</div>

</div></body></html>
